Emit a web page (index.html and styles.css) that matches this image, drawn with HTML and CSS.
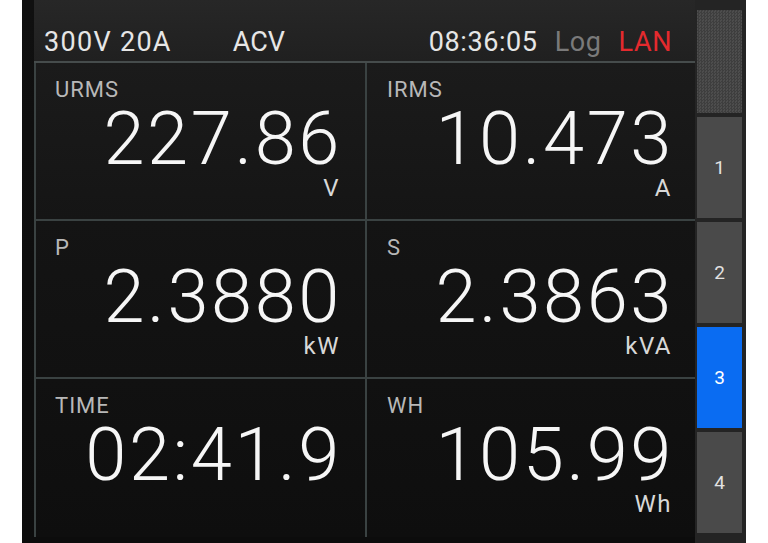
FILE: index.html
```html
<!DOCTYPE html>
<html>
<head>
<meta charset="utf-8">
<link rel="stylesheet" href="styles.css">
</head>
<body>
<div class="screen">
  <div class="main">
    <div class="header">
      <div class="hl">
        <span class="range">300V 20A</span>
        <span class="mode">ACV</span>
      </div>
      <div class="hr">
        <span class="clock">08:36:05</span>
        <span class="log">Log</span>
        <span class="lan">LAN</span>
      </div>
    </div>
    <div class="grid">
      <div class="cell c1">
        <div class="label">URMS</div>
        <div class="value">227.86</div>
        <div class="unit">V</div>
      </div>
      <div class="cell c2">
        <div class="label">IRMS</div>
        <div class="value">10.473</div>
        <div class="unit">A</div>
      </div>
      <div class="cell c1">
        <div class="label">P</div>
        <div class="value">2.3880</div>
        <div class="unit">kW</div>
      </div>
      <div class="cell c2">
        <div class="label">S</div>
        <div class="value">2.3863</div>
        <div class="unit">kVA</div>
      </div>
      <div class="cell c1 last">
        <div class="label">TIME</div>
        <div class="value">02:41.9</div>
        <div class="unit"></div>
      </div>
      <div class="cell c2 last">
        <div class="label">WH</div>
        <div class="value">105.99</div>
        <div class="unit">Wh</div>
      </div>
    </div>
  </div>
  <div class="side">
    <div class="checker"></div>
    <div class="btn">1</div>
    <div class="btn">2</div>
    <div class="btn active">3</div>
    <div class="btn">4</div>
  </div>
</div>
</body>
</html>
```
FILE: styles.css
```css
html, body {
  margin: 0;
  padding: 0;
  background: #ffffff;
}
body {
  font-family: Roboto, "Liberation Sans", sans-serif;
  width: 768px;
  height: 543px;
  overflow: hidden;
}
.screen {
  margin-left: 22px;
  width: 724px;
  height: 543px;
  display: flex;
  background: #0d0d0d;
}
.main {
  width: 661px;
  padding-left: 12px;
  background: linear-gradient(to bottom, #101010 0, #0c0c0c 543px);
}
.header {
  border-bottom: 2px solid #464c4c;
  display: flex;
  justify-content: space-between;
  align-items: flex-start;
  background: linear-gradient(to bottom, #272727, #202020);
  font-size: 27px;
  letter-spacing: 0.6px;
  line-height: 27px;
  padding-top: 29px;
  box-sizing: border-box;
  height: 63px;
  color: #e6e6e6;
}
.hl {
  padding-left: 10px;
  display: flex;
}
.range {
  letter-spacing: 1.3px;
}
.mode {
  margin-left: 61px;
  letter-spacing: 0;
}
.hr {
  display: flex;
  padding-right: 23px;
}
.log {
  color: #7a7a7a;
  margin-left: 17px;
}
.lan {
  color: #e42a2e;
  margin-left: 17px;
}
.grid {
  display: grid;
  grid-template-columns: 331px 330px;
  grid-template-rows: repeat(3, 158px);
}
.cell {
  border-left: 2px solid #3a4242;
  border-bottom: 2px solid #3a4242;
  box-sizing: border-box;
  padding-top: 16px;
  color: #f4f4f4;
}
.cell.last {
  border-bottom: none;
}
.grid .cell:nth-child(1), .grid .cell:nth-child(2) {
  background: linear-gradient(to bottom, #1b1b1b, #151515);
}
.grid .cell:nth-child(3), .grid .cell:nth-child(4) {
  background: linear-gradient(to bottom, #141414, #111111);
}
.grid .cell:nth-child(5), .grid .cell:nth-child(6) {
  background: linear-gradient(to bottom, #111111, #0e0e0e);
}
.c1 {
  padding-left: 19px;
  padding-right: 23px;
}
.c2 {
  padding-left: 20px;
  padding-right: 21px;
}
.label {
  font-size: 22px;
  line-height: 22px;
  height: 22px;
  color: #b8b8b8;
  letter-spacing: 1px;
}
.value {
  margin-top: 1px;
  font-size: 74px;
  line-height: 74px;
  height: 74px;
  font-weight: 300;
  text-align: right;
  color: #f6f6f6;
  letter-spacing: 2.6px;
}
.unit {
  margin-top: 0;
  font-size: 24px;
  line-height: 24px;
  height: 24px;
  text-align: right;
  padding-right: 2px;
  color: #d8d8d8;
  letter-spacing: 1.5px;
}
.side {
  width: 51px;
  box-sizing: border-box;
  padding: 10px 4px 0 2px;
  display: flex;
  flex-direction: column;
  gap: 4px;
  background: #242424;
}
.checker {
  height: 103px;
  background-color: #444444;
  background-image: repeating-conic-gradient(#3e3e3e 0 25%, #4d4d4d 0 50%);
  background-size: 3px 3px;
}
.btn {
  height: 101px;
  background: #4a4a4a;
  color: #e2e2e2;
  font-size: 19px;
  display: flex;
  align-items: center;
  justify-content: center;
}
.btn.active {
  background: #0a6cf2;
  color: #ffffff;
}
```
